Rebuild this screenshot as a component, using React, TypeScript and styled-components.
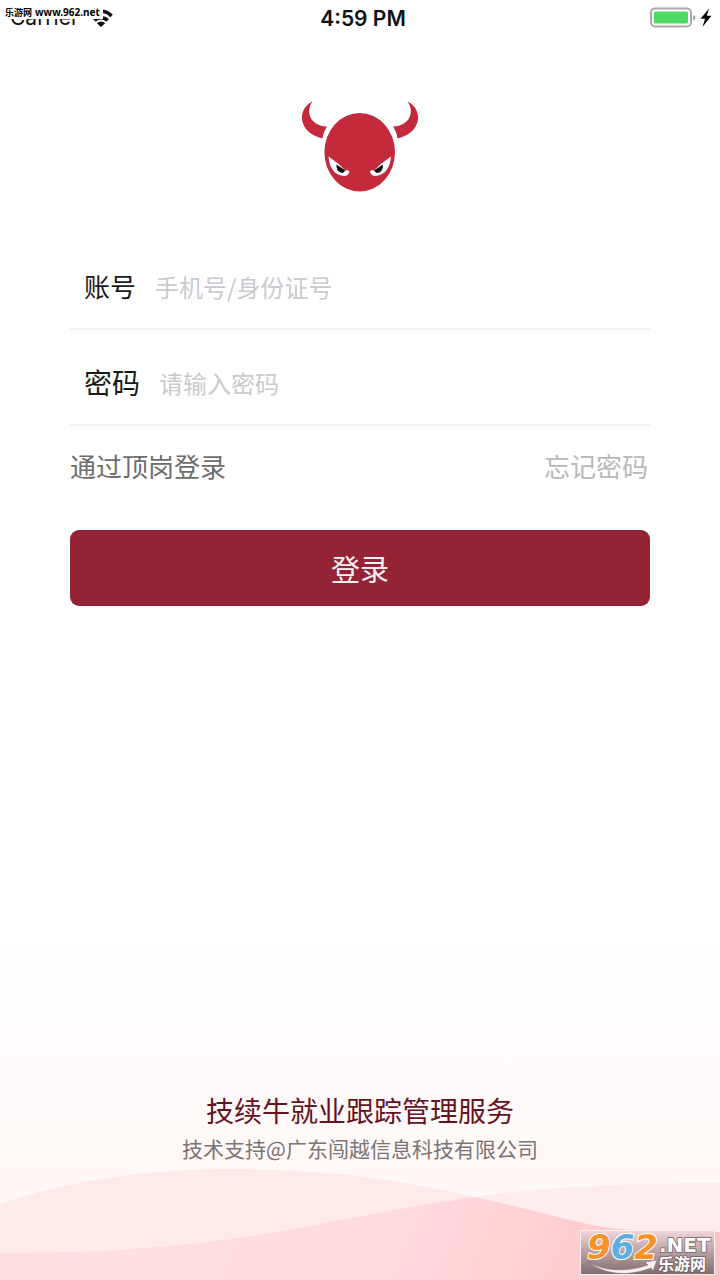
import React, { useState } from 'react';
import styled, { createGlobalStyle } from 'styled-components';

const GlobalStyle = createGlobalStyle`
  *, *::before, *::after { box-sizing: border-box; }
  html, body { margin: 0; padding: 0; }
  body {
    font-family: "Noto Sans CJK SC", "Noto Sans", sans-serif;
    background: #ffffff;
  }
  button, input { font-family: inherit; }
`;

const Page = styled.div`
  position: relative;
  min-height: 100vh;
  display: flex;
  flex-direction: column;
  overflow: hidden;
  background: linear-gradient(to top, #fff6f5 0, #fff8f7 110px, #fffbfb 210px, #ffffff 360px);
`;

const StatusBar = styled.header`
  display: grid;
  grid-template-columns: 1fr auto 1fr;
  align-items: center;
  height: 36px;
  padding: 0 8px 0 10px;
  font-family: Inter, "Liberation Sans", sans-serif;
  font-size: 21px;
  line-height: 24px;
  color: #111111;
`;

const Carrier = styled.div`
  display: flex;
  align-items: center;
  gap: 10px;
`;

const Clock = styled.time`
  padding-top: 2px;
  padding-left: 4px;
  font-weight: 600;
`;

const Power = styled.div`
  display: flex;
  justify-content: flex-end;
`;

const SiteTag = styled.div`
  position: absolute;
  top: 6px;
  left: 3px;
  display: flex;
  gap: 3px;
  padding: 0 3px 0 2px;
  background: #ffffff;
  color: #000000;
  font-family: "Noto Sans", "Noto Sans CJK SC", sans-serif;
  font-size: 9px;
  font-weight: 700;
  line-height: 13px;
  white-space: nowrap;
`;

const SiteHost = styled.span`
  font-size: 10px;
`;

const Main = styled.main`
  flex: 1;
  display: flex;
  flex-direction: column;
  padding: 64px 70px 0;
`;

const Logo = styled.svg`
  align-self: center;
  width: 116px;
  height: 92px;
  margin-bottom: 42px;
`;

const Form = styled.form`
  display: flex;
  flex-direction: column;
`;

const Field = styled.div`
  display: flex;
  align-items: center;
  gap: 19px;
  height: 96px;
  padding: 10px 14px 0;
  border-bottom: 2px solid #f3f3f4;
`;

const Label = styled.label<{ $large?: boolean }>`
  flex: none;
  font-size: ${(p) => (p.$large ? 28 : 26)}px;
  line-height: 40px;
  color: #1a1a1a;
`;

const Input = styled.input`
  flex: 1;
  min-width: 0;
  height: 40px;
  padding: 0;
  border: 0;
  outline: 0;
  background: transparent;
  font-size: 24px;
  color: #1a1a1a;
  &::placeholder { color: #cacace; opacity: 1; }
`;

const Links = styled.nav`
  display: flex;
  align-items: center;
  justify-content: space-between;
  height: 80px;
  padding-right: 2px;
`;

const TextLink = styled.a<{ $muted?: boolean }>`
  font-size: 26px;
  line-height: 40px;
  text-decoration: none;
  color: ${(p) => (p.$muted ? '#b9b9b9' : '#6d6d6d')};
`;

const Submit = styled.button`
  height: 76px;
  margin-top: 24px;
  padding: 0;
  border: 0;
  border-radius: 9px;
  background: #942435;
  color: #fdf3f4;
  font-size: 29px;
  line-height: 40px;
  cursor: pointer;
`;

const Footer = styled.footer`
  display: flex;
  flex-direction: column;
  text-align: center;
`;

const Service = styled.p`
  margin: 0;
  font-size: 28px;
  line-height: 44px;
  color: #65131f;
`;

const Support = styled.p`
  margin: 0 0 2px;
  font-size: 21px;
  line-height: 32px;
  color: #7b7575;
`;

const Waves = styled.svg`
  display: block;
  width: 100%;
  height: 114px;
`;

const SiteBadge = styled.svg`
  position: absolute;
  right: 5px;
  bottom: 5px;
  width: 135px;
  height: 45px;
  overflow: visible;
`;

const WifiIcon = () => (
  <svg width="24" height="18" viewBox="0 0 24 18" fill="none" stroke="#111" strokeWidth="3.600" aria-hidden="true">
    <path d="M1.500 7A14 14 0 0 1 22.500 7" />
    <path d="M5.500 11.500A9 9 0 0 1 18.500 11.500" />
    <path d="M12 18L7.800 14.200A5.800 5.800 0 0 1 16.200 14.200Z" fill="#111" stroke="none" />
  </svg>
);

const BatteryIcon = () => (
  <svg width="62" height="22" viewBox="0 0 62 22" aria-hidden="true">
    <rect x="1" y="1.500" width="40" height="18" rx="4" fill="#fff" stroke="#a9a9ab" strokeWidth="2" />
    <rect x="4" y="4.500" width="34" height="12" rx="1.5" fill="#4cd964" />
    <path d="M43 8Q45.500 8.500 45.500 10.800T43 13.500Z" fill="#a9a9ab" />
    <path d="M59 1.500L50.500 11.700H55L52.500 20L61.500 8.800H56.800Z" fill="#0a0a0a" />
  </svg>
);

const Horn = () => (
  <path
    d="M10.500 1.500C-1 7-3 20 4 29C8 34 14 36.500 20.500 38.500C21 34 22.500 30.500 25 26.800C17 26 9.500 22.500 7.700 15C6.500 9.500 7.500 5.500 10.500 1.500Z"
    fill="#c42a3b"
  />
);

const Eye = () => (
  <>
    <path d="M26.500 56.500L36 63.500L43.500 70.500C46.500 69.500 48.200 71 47 73C46 75.500 43.500 76.300 40.500 75.800C32 74.500 27 67 26.500 56.500Z" fill="#fff" />
    <path d="M34.500 64.500L43.500 70.500L40.800 73C37 73 34 69.500 34.500 64.500Z" fill="#111" />
  </>
);

const BullLogo = () => (
  <Logo viewBox="0 0 116 92" role="img" aria-label="技续牛">
    <Horn />
    <g transform="translate(116 0) scale(-1 1)">
      <Horn />
    </g>
    <ellipse cx="57.700" cy="52.300" rx="35.300" ry="39.300" fill="#c42a3b" />
    <Eye />
    <g transform="translate(115.400 0) scale(-1 1)">
      <Eye />
    </g>
  </Logo>
);

const LEFT_WAVE = 'M0 38C75 12 160 2 242 3C330 4 400 14 475 31C515 40 560 52 597 60C625 65 670 66 720 66V114H0Z';
const RIGHT_WAVE = 'M0 87C100 87 190 81 275 66C350 53 400 42 475 31C550 20 640 17 720 17V114H0Z';

const FooterWaves = () => (
  <Waves viewBox="0 0 720 114" preserveAspectRatio="none" aria-hidden="true">
    <defs>
      <linearGradient id="deep" gradientUnits="userSpaceOnUse" x1="120" y1="0" x2="640" y2="220">
        <stop offset="0" stopColor="#ffdfe1" />
        <stop offset="0.500" stopColor="#ffdadd" />
        <stop offset="1" stopColor="#ffc3c7" />
      </linearGradient>
      <clipPath id="left-wave">
        <path d={LEFT_WAVE} />
      </clipPath>
    </defs>
    <path d={LEFT_WAVE} fill="#ffeaea" />
    <path d={RIGHT_WAVE} fill="#ffeced" />
    <path d={RIGHT_WAVE} fill="url(#deep)" clipPath="url(#left-wave)" />
  </Waves>
);

const Badge = () => (
  <SiteBadge viewBox="0 0 135 45" role="img" aria-label="962.NET 乐游网">
    <defs>
      <linearGradient id="badge" x1="0" y1="0" x2="0" y2="1">
        <stop offset="0" stopColor="#f0d6d9" />
        <stop offset="0.500" stopColor="#b99fa2" />
        <stop offset="1" stopColor="#806b6e" />
      </linearGradient>
    </defs>
    <rect x="0.500" y="0.500" width="134" height="44" fill="url(#badge)" stroke="#fbeeee" />
    <text
      x="7"
      y="29"
      fontFamily="DejaVu Sans, sans-serif"
      fontWeight="700"
      fontStyle="italic"
      fontSize="34"
      stroke="#fff"
      strokeWidth="2"
      paintOrder="stroke"
      fill="#f7922a"
    >
      9<tspan fill="#5aaee2">6</tspan>2
    </text>
    <path d="M7 31C24 42 48 42 68 35L65 32L77 30L73 41L71 38C48 47 24 45 7 31Z" fill="#f6f0f0" stroke="#7d686b" strokeWidth="0.500" />
    <g fill="#fff" stroke="#746063" strokeWidth="1.500" paintOrder="stroke" fontWeight="700">
      <text x="79" y="22" fontFamily="DejaVu Sans, sans-serif" fontSize="20">.NET</text>
      <text x="78" y="40" fontFamily="Noto Sans CJK SC, sans-serif" fontSize="16">乐游网</text>
    </g>
  </SiteBadge>
);

export default function App() {
  const [account, setAccount] = useState('');
  const [password, setPassword] = useState('');

  return (
    <>
      <GlobalStyle />
      <Page>
        <StatusBar>
          <Carrier>
            <span>Carrier</span>
            <WifiIcon />
          </Carrier>
          <Clock>4:59 PM</Clock>
          <Power>
            <BatteryIcon />
          </Power>
        </StatusBar>
        <SiteTag>
          <span>乐游网</span>
          <SiteHost>www.962.net</SiteHost>
        </SiteTag>

        <Main>
          <BullLogo />
          <Form onSubmit={(e) => e.preventDefault()}>
            <Field>
              <Label htmlFor="account">账号</Label>
              <Input
                id="account"
                type="text"
                placeholder="手机号/身份证号"
                value={account}
                onChange={(e) => setAccount(e.target.value)}
              />
            </Field>
            <Field>
              <Label htmlFor="password" $large>密码</Label>
              <Input
                id="password"
                type="password"
                placeholder="请输入密码"
                value={password}
                onChange={(e) => setPassword(e.target.value)}
              />
            </Field>
            <Links>
              <TextLink href="#internship">通过顶岗登录</TextLink>
              <TextLink href="#forgot" $muted>忘记密码</TextLink>
            </Links>
            <Submit type="submit">登录</Submit>
          </Form>
        </Main>

        <Footer>
          <Service>技续牛就业跟踪管理服务</Service>
          <Support>技术支持@广东闯越信息科技有限公司</Support>
          <FooterWaves />
        </Footer>
        <Badge />
      </Page>
    </>
  );
}
